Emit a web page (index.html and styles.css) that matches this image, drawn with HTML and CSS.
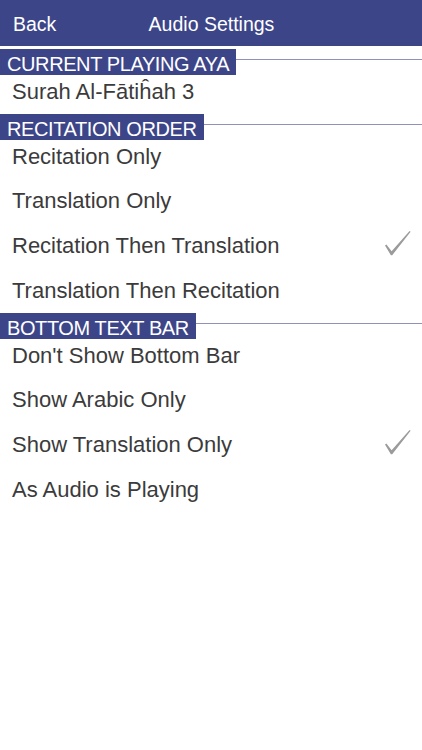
FILE: index.html
```html
<!DOCTYPE html>
<html>
<head>
<meta charset="utf-8">
<link rel="stylesheet" href="styles.css">
</head>
<body>
<div class="nav">
  <span class="nav-back">Back</span>
  <span class="nav-title">Audio Settings</span>
  <span></span>
</div>
<div class="content">
  <div class="section">
    <div class="sec-head"><span class="sec-label">CURRENT PLAYING AYA</span><span class="sec-line"></span></div>
    <div class="row"><span>Surah Al-Fātiĥah 3</span></div>
  </div>
  <div class="section">
    <div class="sec-head"><span class="sec-label">RECITATION ORDER</span><span class="sec-line"></span></div>
    <div class="row"><span>Recitation Only</span></div>
    <div class="row"><span>Translation Only</span></div>
    <div class="row"><span>Recitation Then Translation</span>
      <svg class="check" viewBox="0 0 26 25" width="26" height="25"><path d="M0,14.6 L1.4,13.6 L6.6,20.2 L24.6,0 L25.6,0.7 L7.2,24.2 L5.9,24.2 Z" fill="#9b9b9b"/></svg>
    </div>
    <div class="row"><span>Translation Then Recitation</span></div>
  </div>
  <div class="section">
    <div class="sec-head"><span class="sec-label">BOTTOM TEXT BAR</span><span class="sec-line"></span></div>
    <div class="row"><span>Don't Show Bottom Bar</span></div>
    <div class="row"><span>Show Arabic Only</span></div>
    <div class="row"><span>Show Translation Only</span>
      <svg class="check" viewBox="0 0 26 25" width="26" height="25"><path d="M0,14.6 L1.4,13.6 L6.6,20.2 L24.6,0 L25.6,0.7 L7.2,24.2 L5.9,24.2 Z" fill="#9b9b9b"/></svg>
    </div>
    <div class="row"><span>As Audio is Playing</span></div>
  </div>
</div>
</body>
</html>
```
FILE: styles.css
```css
html, body {
  margin: 0;
  padding: 0;
  background: #ffffff;
  font-family: "Liberation Sans", Arial, sans-serif;
}
.nav {
  height: 46px;
  box-sizing: border-box;
  padding: 13px 0 0 13px;
  background: #3d4589;
  color: #ffffff;
  font-size: 19.5px;
  line-height: 22px;
  display: grid;
  grid-template-columns: 1fr auto 1fr;
  align-items: start;
}
.nav-back {
  justify-self: start;
}
.nav-title {
  position: relative;
  left: -6px;
}
.content {
  padding-top: 3px;
}
.sec-head {
  height: 20px;
  display: flex;
  align-items: flex-start;
}
.sec-label {
  flex: none;
  height: 26px;
  box-sizing: border-box;
  padding: 4px 7px 0 7px;
  line-height: 22px;
  font-size: 20px;
  letter-spacing: -0.4px;
  color: #ffffff;
  background: #3d4589;
  white-space: nowrap;
}
.sec-line {
  flex: 1;
  height: 1px;
  margin-top: 10px;
  background: #8e91b9;
}
.row {
  height: 44.75px;
  line-height: 45px;
  font-size: 22px;
  color: #3b3b3b;
  padding: 0 12px;
  display: flex;
  justify-content: space-between;
  align-items: center;
}
.check {
  display: block;
  margin-top: -4px;
  margin-right: -1px;
}
```
